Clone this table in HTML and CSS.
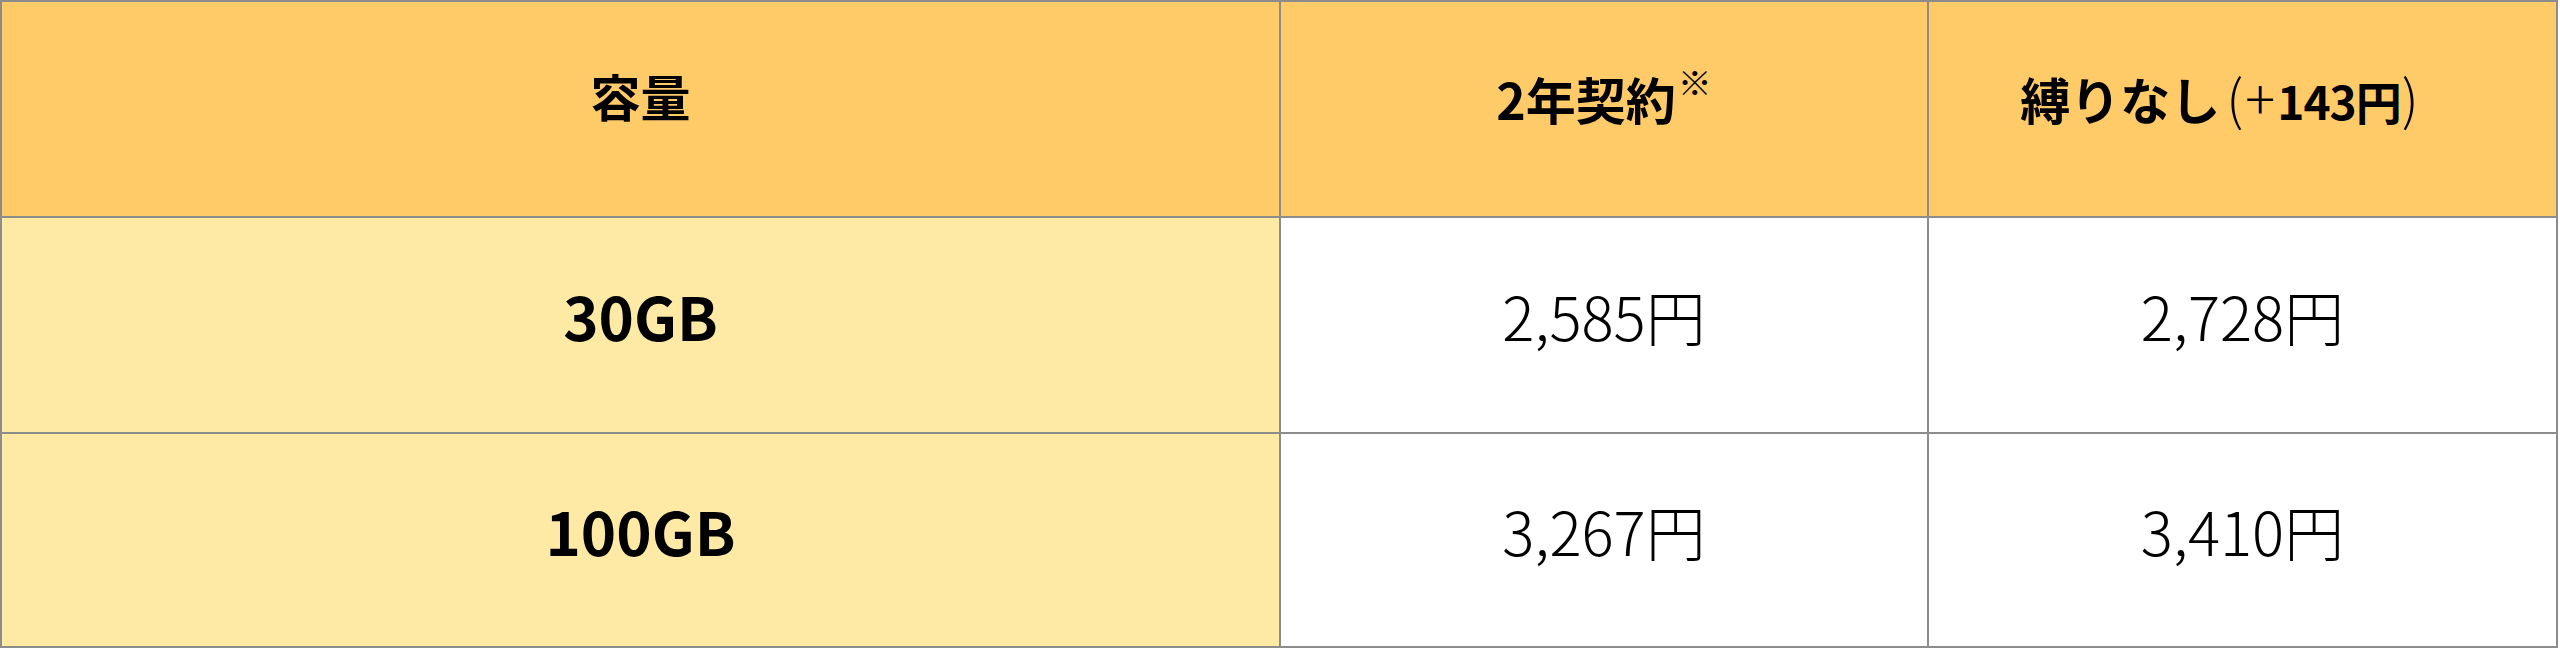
FILE: index.html
```html
<!DOCTYPE html>
<html lang="ja">
<head>
<meta charset="utf-8">
<link rel="stylesheet" href="styles.css">
</head>
<body>
<table class="plans">
  <colgroup>
    <col class="c1"><col class="c2"><col class="c3">
  </colgroup>
  <tr class="head">
    <th>容量</th>
    <th>2年契約<span class="mark">※</span></th>
    <th class="nobind">縛りなし<span class="extra"><span class="thin paren">(</span><span class="thin plus">+</span><span class="num">143</span>円<span class="thin paren">)</span></span></th>
  </tr>
  <tr class="row">
    <th class="cap">30GB</th>
    <td>2,585円</td>
    <td>2,728円</td>
  </tr>
  <tr class="row last">
    <th class="cap">100GB</th>
    <td>3,267円</td>
    <td>3,410円</td>
  </tr>
</table>
</body>
</html>
```
FILE: styles.css
```css
html, body {
  margin: 0;
  padding: 0;
  background: #ffffff;
}
body {
  font-family: "Noto Sans CJK JP", "Noto Sans", sans-serif;
  color: #000;
}
.plans {
  width: 2558px;
  height: 648px;
  border-collapse: separate;
  border-spacing: 2px;
  background: #8c8c8c;
  table-layout: fixed;
}
.c1 { width: 1277px; }
.c2 { width: 646px; }
.c3 { width: 627px; }
.plans th, .plans td {
  padding: 0 0 22px 0;
  text-align: center;
  vertical-align: middle;
}
.head { height: 214px; }
.row { height: 214px; }
.row.last { height: 212px; }
.head th {
  background: #ffca68;
  font-size: 50px;
  font-weight: 700;
  padding-bottom: 28px;
}
.head th.nobind { padding-right: 46px; }
.mark {
  font-size: 0.68em;
  font-weight: 400;
  vertical-align: 0.7em;
  margin-left: 2px;
}
.extra {
  font-size: 46px;
  margin-left: 6px;
}
.thin { font-weight: 300; }
.paren { font-size: 54px; }
.plus {
  font-size: 56px;
  margin: 0 2px 0 2px;
}
.num { letter-spacing: -1px; }
.cap {
  background: #feeaa4;
  font-size: 60px;
  font-weight: 700;
}
.row td {
  background: #ffffff;
  font-size: 60px;
  font-weight: 300;
}
```
